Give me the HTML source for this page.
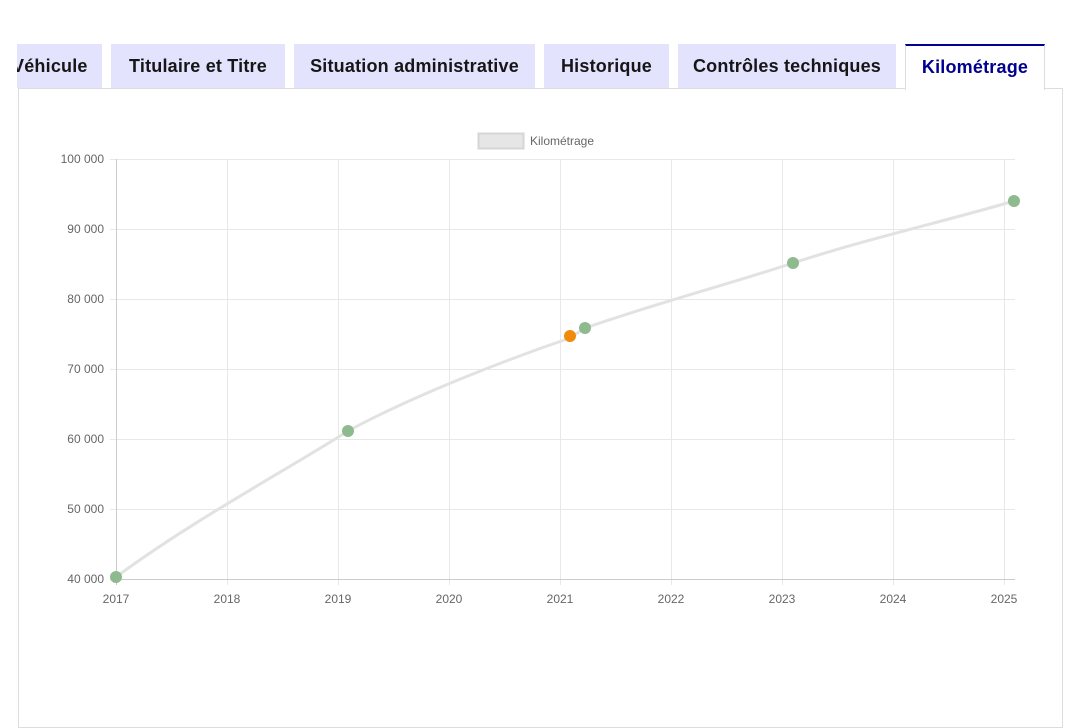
<!DOCTYPE html>
<html><head><meta charset="utf-8"><style>
body{margin:0;width:1080px;height:709px;background:#fff;overflow:hidden;position:relative;font-family:"Liberation Sans",sans-serif}
.tab{position:absolute;top:44px;height:44px;background:#e3e3fd;color:#161616;font-weight:bold;font-size:18px;letter-spacing:0.2px;line-height:45px;text-align:center;box-sizing:border-box}
.act{background:#fff;color:#000091;border-top:2px solid #000091;border-left:1px solid #ddd;border-right:1px solid #ddd;height:46px;line-height:43px;z-index:2}
.panel{position:absolute;left:18px;top:88px;width:1045px;height:640px;border:1px solid #ddd;box-sizing:border-box}
</style></head><body>
<div class="panel"></div>
<div class="tab" style="left:17px;width:85px;text-align:left;overflow:hidden"><span style="margin-left:-5px">Véhicule</span></div>
<div class="tab" style="left:111px;width:174px">Titulaire et Titre</div>
<div class="tab" style="left:294px;width:241px">Situation administrative</div>
<div class="tab" style="left:544px;width:125px">Historique</div>
<div class="tab" style="left:678px;width:218px">Contrôles techniques</div>
<div class="tab act" style="left:905px;width:140px">Kilométrage</div>
<svg width="1080" height="709" style="position:absolute;left:0;top:0" font-family="Liberation Sans, sans-serif" font-size="12" fill="#666">
<rect x="478.5" y="133.5" width="45" height="15" fill="#e6e6e6" stroke="#d6d6d6" stroke-width="2"/>
<text x="530" y="145">Kilométrage</text>
<g stroke="#e8e8e8" stroke-width="1">
<line x1="110" y1="159.5" x2="1015" y2="159.5"/><line x1="110" y1="229.5" x2="1015" y2="229.5"/><line x1="110" y1="299.5" x2="1015" y2="299.5"/><line x1="110" y1="369.5" x2="1015" y2="369.5"/><line x1="110" y1="439.5" x2="1015" y2="439.5"/><line x1="110" y1="509.5" x2="1015" y2="509.5"/>
<line x1="227.5" y1="159" x2="227.5" y2="585"/><line x1="338.5" y1="159" x2="338.5" y2="585"/><line x1="449.5" y1="159" x2="449.5" y2="585"/><line x1="560.5" y1="159" x2="560.5" y2="585"/><line x1="671.5" y1="159" x2="671.5" y2="585"/><line x1="782.5" y1="159" x2="782.5" y2="585"/><line x1="893.5" y1="159" x2="893.5" y2="585"/><line x1="1004.5" y1="159" x2="1004.5" y2="585"/>
</g>
<g stroke="#ccc"><line x1="116.5" y1="159" x2="116.5" y2="585"/><line x1="110" y1="579.5" x2="1015" y2="579.5"/></g>
<g text-anchor="end"><text x="104" y="163">100 000</text><text x="104" y="233">90 000</text><text x="104" y="303">80 000</text><text x="104" y="373">70 000</text><text x="104" y="443">60 000</text><text x="104" y="513">50 000</text><text x="104" y="583">40 000</text></g>
<g text-anchor="middle"><text x="116" y="603">2017</text><text x="227" y="603">2018</text><text x="338" y="603">2019</text><text x="449" y="603">2020</text><text x="560" y="603">2021</text><text x="671" y="603">2022</text><text x="782" y="603">2023</text><text x="893" y="603">2024</text><text x="1004" y="603">2025</text></g>
<path d="M116 577 C190 522 290 468 348 431 C420 392 520 355 570 338 L585 328 C660 302 730 284 793 263 C870 238 950 220 1014 201" fill="none" stroke="#e2e2e2" stroke-width="3"/>
<g fill="#8fba8f"><circle cx="116" cy="577" r="6"/><circle cx="348" cy="431" r="6"/><circle cx="585" cy="328" r="6"/><circle cx="793" cy="263" r="6"/><circle cx="1014" cy="201" r="6"/></g>
<circle cx="570" cy="336" r="6" fill="#ef8a0c"/>
</svg>
</body></html>
